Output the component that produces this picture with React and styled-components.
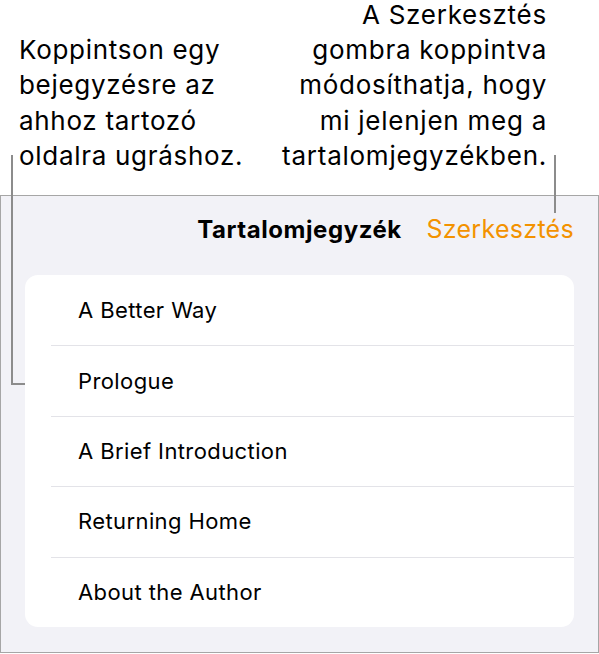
import React from 'react';
import styled, {createGlobalStyle} from 'styled-components';

const entries = ['A Better Way', 'Prologue', 'A Brief Introduction', 'Returning Home', 'About the Author'];

function App() {
    return (
        <Page>
            <GlobalStyle />
            <Callouts>
                <CalloutText>
                    Koppintson egy<br />bejegyzésre az<br />ahhoz tartozó<br />oldalra ugráshoz.
                </CalloutText>
                <CalloutText $right>
                    A Szerkesztés<br />gombra koppintva<br />módosíthatja, hogy<br />mi jelenjen meg a<br />tartalomjegyzékben.
                </CalloutText>
            </Callouts>
            <Panel>
                <Header>
                    <Title>Tartalomjegyzék</Title>
                    <EditButton>Szerkesztés</EditButton>
                </Header>
                <Card>
                    {entries.map((entry, index) => (
                        <Row key={entry} $first={index === 0}>
                            <RowLabel>{entry}</RowLabel>
                        </Row>
                    ))}
                </Card>
            </Panel>
            <LeaderLeft />
            <LeaderLeftFoot />
            <LeaderRight />
        </Page>
    );
}
export default App;

const GlobalStyle = createGlobalStyle`
    body {
        margin: 0;
        background: #ffffff;
        font-family: Inter, "Noto Sans", sans-serif;
        color: #000;
    }
`;
const Page = styled.div`
    position: relative;
    width: 599px;
    height: 654px;
    overflow: hidden;
`;
const Callouts = styled.div`
    height: 195px;
    box-sizing: border-box;
    display: flex;
    justify-content: space-between;
    align-items: flex-end;
    padding: 0 52px 22px 19px;
`;
const CalloutText = styled.div`
    font-size: 26px;
    line-height: 35.2px;
    letter-spacing: ${p => (p.$right ? '0.75px' : '0.7px')};
    text-align: ${p => (p.$right ? 'right' : 'left')};
    color: #000;
    white-space: nowrap;
`;
const Panel = styled.div`
    height: 458px;
    box-sizing: border-box;
    background: #f2f2f7;
    border: 1px solid #a6a6a6;
    padding: 0 24px;
    display: flex;
    flex-direction: column;
`;
const Header = styled.div`
    position: relative;
    height: 79px;
    display: flex;
    align-items: center;
    justify-content: center;
`;
const Title = styled.div`
    font-size: 24px;
    font-weight: 700;
    letter-spacing: 0.55px;
    margin-top: -12px;
`;
const EditButton = styled.div`
    position: absolute;
    right: 0;
    top: 18px;
    font-size: 25px;
    letter-spacing: 0.3px;
    color: #f39200;
`;
const Card = styled.div`
    background: #fff;
    border-radius: 13px;
    overflow: hidden;
`;
const Row = styled.div`
    height: 70.4px;
    display: flex;
    align-items: center;
    padding-left: 53px;
    position: relative;
    &::before {
        content: '';
        display: ${p => (p.$first ? 'none' : 'block')};
        position: absolute;
        top: 0;
        left: 26px;
        right: 0;
        height: 1px;
        background: #e3e3e8;
    }
`;
const RowLabel = styled.div`
    font-size: 22px;
    letter-spacing: 0.4px;
`;
const LeaderLeft = styled.div`
    position: absolute;
    left: 11px;
    top: 155px;
    width: 2px;
    height: 230px;
    background: #8c8c8c;
`;
const LeaderLeftFoot = styled.div`
    position: absolute;
    left: 11px;
    top: 383px;
    width: 14px;
    height: 2px;
    background: #8c8c8c;
`;
const LeaderRight = styled.div`
    position: absolute;
    left: 554px;
    top: 155px;
    width: 2px;
    height: 58px;
    background: #8c8c8c;
`;
